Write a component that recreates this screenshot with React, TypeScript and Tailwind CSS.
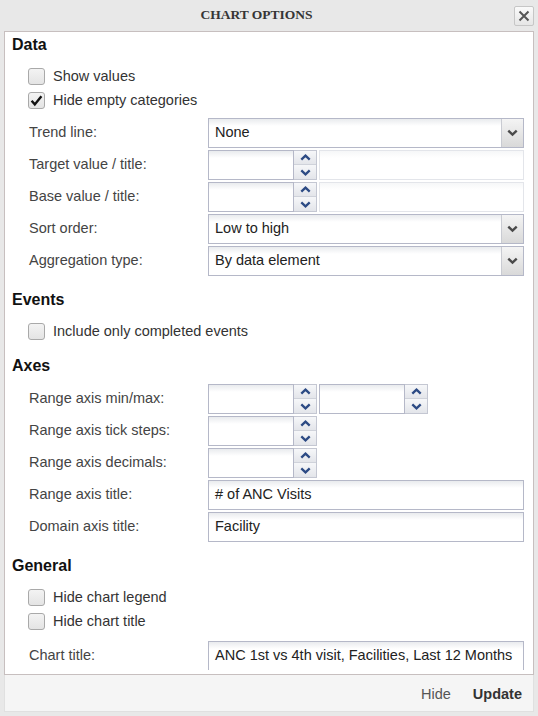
import React from "react";

const inputBg =
  "bg-[linear-gradient(to_bottom,#e9ebee_0px,#ffffff_7px,#ffffff_100%)]";

function Heading({ children, mt }: { children: React.ReactNode; mt: string }) {
  return (
    <div className={`${mt} h-[20px] leading-[20px] pl-[7px] text-[16px] font-bold text-[#111]`}>
      {children}
    </div>
  );
}

function Check({ label, checked }: { label: string; checked?: boolean }) {
  return (
    <div className="h-[24px] flex items-center pl-[23px]">
      <div className="w-[17px] h-[17px] rounded-[3px] border border-[#a9a9a9] bg-[linear-gradient(to_bottom,#f3f3f3,#e4e4e4)] flex items-center justify-center">
        {checked && (
          <svg width="13" height="13" viewBox="0 0 13 13">
            <path d="M1.6 6.8 L4.8 10.4 L11.4 2.2" fill="none" stroke="#111" strokeWidth="2.4" strokeLinejoin="miter" />
          </svg>
        )}
      </div>
      <span className="ml-[8px] text-[14.5px] text-[#333] leading-[18px]">{label}</span>
    </div>
  );
}

function Row({ label, children, mt }: { label: string; children: React.ReactNode; mt?: string }) {
  return (
    <div className={`flex h-[30px] ${mt ?? ""}`}>
      <div className="w-[203px] pl-[24px] pt-[5px] leading-[18px] text-[14.5px] text-[#444]">{label}</div>
      <div className="flex">{children}</div>
    </div>
  );
}

function Select({ value }: { value: string }) {
  return (
    <div className={`w-[316px] h-[30px] border border-[#b5b8c8] flex ${inputBg}`}>
      <div className="flex-1 pl-[6px] flex items-center text-[14.5px] text-[#222]">{value}</div>
      <div className="w-[22px] h-full border-l border-[#c9cbd2] bg-[linear-gradient(to_bottom,#f4f4f4,#d9d9d9)] flex items-center justify-center">
        <svg width="11" height="8" viewBox="0 0 11 8">
          <path d="M1.3 1.6 L5.5 5.6 L9.7 1.6" fill="none" stroke="#4a4a4a" strokeWidth="2.4" />
        </svg>
      </div>
    </div>
  );
}

function Caret({ up }: { up?: boolean }) {
  return (
    <svg width="11" height="7" viewBox="0 0 11 7">
      <path
        d={up ? "M1.3 5.6 L5.5 1.6 L9.7 5.6" : "M1.3 1.4 L5.5 5.4 L9.7 1.4"}
        fill="none"
        stroke="#2c4a84"
        strokeWidth="2.3"
      />
    </svg>
  );
}

function Spinner() {
  return (
    <div className="w-[109px] h-[30px] flex">
      <div className={`w-[86px] h-full border border-[#b5b8c8] ${inputBg}`} />
      <div className="w-[23px] h-full flex flex-col border border-l-0 border-[#c4c7d2]">
        <div className="h-[14px] bg-[linear-gradient(to_bottom,#f6f7f9,#e3e5ea)] border-b border-[#cfd2da] flex items-center justify-center">
          <Caret up />
        </div>
        <div className="flex-1 bg-[linear-gradient(to_bottom,#f6f7f9,#e3e5ea)] flex items-center justify-center">
          <Caret />
        </div>
      </div>
    </div>
  );
}

function Text({ value, w = "w-[316px]", faint }: { value?: string; w?: string; faint?: boolean }) {
  return (
    <div
      className={`${w} h-[30px] border ${faint ? "border-[#e3e5ea] bg-[linear-gradient(to_bottom,#f6f7f8_0px,#ffffff_7px)]" : `border-[#b5b8c8] ${inputBg}`} pl-[6px] flex items-center text-[14.5px] text-[#222] whitespace-nowrap overflow-hidden`}
    >
      {value}
    </div>
  );
}

export default function App() {
  return (
    <div className="w-[538px] h-[716px] bg-[#e8e8e8] overflow-hidden font-['Liberation_Sans',Arial,sans-serif]">
      <div className="h-[31px] flex items-center">
        <div className="w-[513px] text-center font-['Liberation_Serif','Times_New_Roman',serif] font-bold text-[13.5px] text-[#353535]">
          CHART OPTIONS
        </div>
        <div className="ml-[1px] w-[20px] h-[20px] rounded-[2px] border border-[#c6c6c6] bg-[linear-gradient(to_bottom,#fafafa,#e6e6e6)] flex items-center justify-center">
          <svg width="12" height="12" viewBox="0 0 12 12">
            <path d="M1.5 1.5 L10.5 10.5 M10.5 1.5 L1.5 10.5" stroke="#555" strokeWidth="2" />
          </svg>
        </div>
      </div>

      <div className="ml-[4px] w-[530px] h-[644px] border border-[#c7bfbf] bg-white">
        <div className="h-[638px] overflow-hidden">
          <Heading mt="mt-[3px]">Data</Heading>
          <div className="mt-[9px]">
            <Check label="Show values" />
            <Check label="Hide empty categories" checked />
          </div>
          <div className="mt-[6px] flex flex-col gap-[2px]">
            <Row label="Trend line:">
              <Select value="None" />
            </Row>
            <Row label="Target value / title:">
              <Spinner />
              <div className="w-[2px]" />
              <Text w="w-[205px]" faint />
            </Row>
            <Row label="Base value / title:">
              <Spinner />
              <div className="w-[2px]" />
              <Text w="w-[205px]" faint />
            </Row>
            <Row label="Sort order:">
              <Select value="Low to high" />
            </Row>
            <Row label="Aggregation type:">
              <Select value="By data element" />
            </Row>
          </div>

          <Heading mt="mt-[14px]">Events</Heading>
          <div className="mt-[9px]">
            <Check label="Include only completed events" />
          </div>

          <Heading mt="mt-[13px]">Axes</Heading>
          <div className="mt-[8px] flex flex-col gap-[2px]">
            <Row label="Range axis min/max:">
              <Spinner />
              <div className="w-[2px]" />
              <Spinner />
            </Row>
            <Row label="Range axis tick steps:">
              <Spinner />
            </Row>
            <Row label="Range axis decimals:">
              <Spinner />
            </Row>
            <Row label="Range axis title:">
              <Text value="# of ANC Visits" />
            </Row>
            <Row label="Domain axis title:">
              <Text value="Facility" />
            </Row>
          </div>

          <Heading mt="mt-[14px]">General</Heading>
          <div className="mt-[9px]">
            <Check label="Hide chart legend" />
            <Check label="Hide chart title" />
          </div>
          <div className="mt-[8px]">
            <Row label="Chart title:">
              <Text value="ANC 1st vs 4th visit, Facilities, Last 12 Months" />
            </Row>
          </div>
        </div>
      </div>

      <div className="ml-[4px] w-[530px] h-[37px] bg-[#f5f5f5] border-x border-b border-[#e0e0e0] flex items-center justify-end pr-[11px] pt-[3px]">
        <span className="text-[14.5px] text-[#555]">Hide</span>
        <span className="ml-[22px] text-[14.5px] font-bold text-[#333]">Update</span>
      </div>
    </div>
  );
}
